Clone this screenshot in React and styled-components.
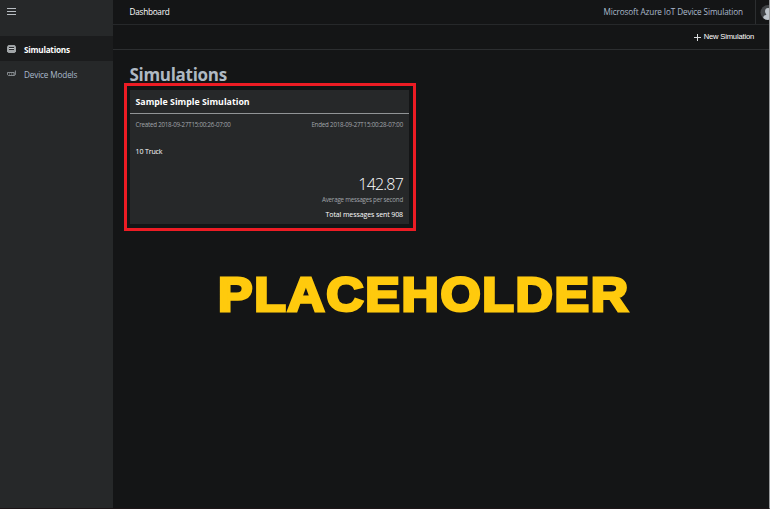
import React from "react";
import styled, { createGlobalStyle } from "styled-components";

const GlobalStyle = createGlobalStyle`
  * { box-sizing: border-box; }
  body { margin: 0; background: #141516; overflow: hidden; }
`;

const Shell = styled.div`
  display: grid;
  grid-template-columns: 113px 1fr;
  width: 770px;
  height: 509px;
  background: #141516;
  border-right: 1px solid #999b9d;
  border-bottom: 1px solid #1c1517;
  font-family: "Open Sans", "Noto Sans", sans-serif;
  color: #fff;
`;

const Sidebar = styled.nav`
  background: #262829;
`;

const MenuButton = styled.div`
  display: flex;
  height: 36px;
  padding: 8px 0 0 7px;
`;

const NavItem = styled.div`
  display: flex;
  align-items: center;
  height: 25px;
  padding-left: 7px;
  gap: 8px;
  background: ${(p) => (p.$active ? "#1b1c1d" : "transparent")};
`;

const NavText = styled.div`
  padding-top: 2px;
`;

const Label = styled.span`
  display: block;
  white-space: nowrap;
  font-size: ${(p) => p.$size}px;
  line-height: ${(p) => p.$line || 12}px;
  font-weight: ${(p) => p.$weight || 400};
  letter-spacing: ${(p) => p.$spacing || 0}px;
  color: ${(p) => p.$color || "#fff"};
  font-family: ${(p) => p.$family || "inherit"};
`;

const Main = styled.main`
  min-width: 0;
  overflow: hidden;
`;

const Header = styled.header`
  display: flex;
  align-items: stretch;
  height: 25px;
  padding-left: 16.5px;
  border-bottom: 1px solid #26282a;
`;

const HeaderText = styled.div`
  padding-top: 6px;
  margin-left: ${(p) => (p.$end ? "auto" : 0)};
`;

const Profile = styled.div`
  width: 14px;
  height: 24px;
  margin-left: 12px;
  padding: 4px 0 0 4px;
  border-left: 1px solid #2c2e30;
  overflow: hidden;
`;

const Toolbar = styled.div`
  display: flex;
  justify-content: flex-end;
  align-items: center;
  gap: 3px;
  height: 25px;
  padding-right: 15px;
  border-bottom: 1px solid #2c2e30;
`;

const Content = styled.section`
  padding: 13px 0 0 11px;
`;

const Title = styled.h1`
  margin: 0 0 -3px 5.5px;
  height: 23px;
  font-size: 17px;
  line-height: 23px;
  font-weight: 700;
  letter-spacing: -0.3px;
  color: #afb9c3;
`;

const Highlight = styled.div`
  width: 292px;
  height: 148px;
  padding: 4px 3px 3px;
  border: 3px solid #ed1c24;
`;

const Card = styled.article`
  width: 279px;
  height: 134px;
  background: #262829;
`;

const CardHeader = styled.div`
  display: flex;
  height: 24px;
  padding: 6px 0 0 5.5px;
  border-bottom: 1px solid #919496;
`;

const CardBody = styled.div`
  display: flex;
  flex-direction: column;
  padding: 5px 6px 0 5.5px;
`;

const Dates = styled.div`
  display: flex;
  justify-content: space-between;
  margin-bottom: 15px;
`;

const Stats = styled.div`
  display: flex;
  flex-direction: column;
  align-items: flex-end;
  padding-top: 16px;
`;

const Total = styled.div`
  padding-top: 5px;
`;

const Placeholder = styled.div`
  margin: 38px 0 0 94px;
  width: max-content;
  transform: scaleX(1.066);
  transform-origin: left;
  font-family: "Liberation Sans", Arial, sans-serif;
  font-size: 48.5px;
  line-height: 50px;
  font-weight: 700;
  letter-spacing: 1.55px;
  -webkit-text-stroke: 3px #ffca0d;
  white-space: nowrap;
  color: #ffca0d;
`;

const blue = "#aab9cb";
const grey = "#a0a5a9";

const HamburgerIcon = () => (
  <svg width="9" height="8" viewBox="0 0 9 8">
    <path d="M0 .5h9M0 3.5h9M0 6.5h9" stroke="#b8bdc2" />
  </svg>
);

const SimulationIcon = () => (
  <svg width="9" height="10" viewBox="0 0 9 10">
    <path d="M1.5 1h6L9 2.5v5L7.5 9h-6L0 7.5v-5z" fill="#a0a4a7" />
    <path d="M2 3h5v3H2z" fill="#292b2d" />
    <path d="M2 4.5h5" stroke="#c9cccf" />
  </svg>
);

const DeviceIcon = () => (
  <svg width="9" height="9" viewBox="0 0 9 9" fill="none" stroke="#a0a5a9" strokeWidth=".8">
    <path d="M.5 3.5h6.7v3H1.4L.5 5.7zM8.4 1.5v4.2l-1 .8M2 5h1M4 5h1M5.8 5h.8" />
  </svg>
);

const AvatarIcon = () => (
  <svg width="16" height="16" viewBox="0 0 16 16">
    <circle cx="8" cy="7.5" r="7.5" fill="#414447" />
    <path d="M3.2 13c0-2 1.2-2.7 3-3V9C4.4 7.6 4.5 3 8 3s3.6 4.6 1.8 6v1c1.8.3 3 1 3 3-2.5 2.5-7.2 2.5-9.6 0z" fill="#bdc4cb" />
  </svg>
);

const PlusIcon = () => (
  <svg width="7" height="7" viewBox="0 0 7 7">
    <path d="M3.5 0v7M0 3.5h7" stroke="#d9dbdd" />
  </svg>
);

export default function App() {
  return (
    <>
      <GlobalStyle />
      <Shell>
        <Sidebar>
          <MenuButton><HamburgerIcon /></MenuButton>
          <NavItem $active>
            <SimulationIcon />
            <NavText><Label $size={8.2} $weight={700} $spacing={-0.25}>Simulations</Label></NavText>
          </NavItem>
          <NavItem>
            <DeviceIcon />
            <NavText><Label $size={8.2} $spacing={-0.15} $color={blue}>Device Models</Label></NavText>
          </NavItem>
        </Sidebar>
        <Main>
          <Header>
            <HeaderText><Label $size={8.2} $spacing={-0.25}>Dashboard</Label></HeaderText>
            <HeaderText $end>
              <Label $size={8.2} $spacing={-0.13} $color={blue}>Microsoft Azure IoT Device Simulation</Label>
            </HeaderText>
            <Profile><AvatarIcon /></Profile>
          </Header>
          <Toolbar>
            <PlusIcon />
            <Label $size={7.6} $spacing={-0.18} $family='"Liberation Sans", Arial, sans-serif'>New Simulation</Label>
          </Toolbar>
          <Content>
            <Title>Simulations</Title>
            <Highlight>
              <Card>
                <CardHeader>
                  <Label $size={8.8} $weight={700}>Sample Simple Simulation</Label>
                </CardHeader>
                <CardBody>
                  <Dates>
                    <Label $size={6.2} $spacing={-0.22} $color={grey}>Created 2018-09-27T15:00:26-07:00</Label>
                    <Label $size={6.2} $spacing={-0.2} $color={grey}>Ended 2018-09-27T15:00:28-07:00</Label>
                  </Dates>
                  <Label $size={7} $spacing={-0.12}>10 Truck</Label>
                  <Stats>
                    <Label $size={16} $line={21} $weight={300} $spacing={-0.8}>142.87</Label>
                    <Label $size={6.2} $line={9} $spacing={-0.22} $color={grey}>Average messages per second</Label>
                    <Total><Label $size={7} $spacing={-0.1}>Total messages sent 908</Label></Total>
                  </Stats>
                </CardBody>
              </Card>
            </Highlight>
            <Placeholder>PLACEHOLDER</Placeholder>
          </Content>
        </Main>
      </Shell>
    </>
  );
}
